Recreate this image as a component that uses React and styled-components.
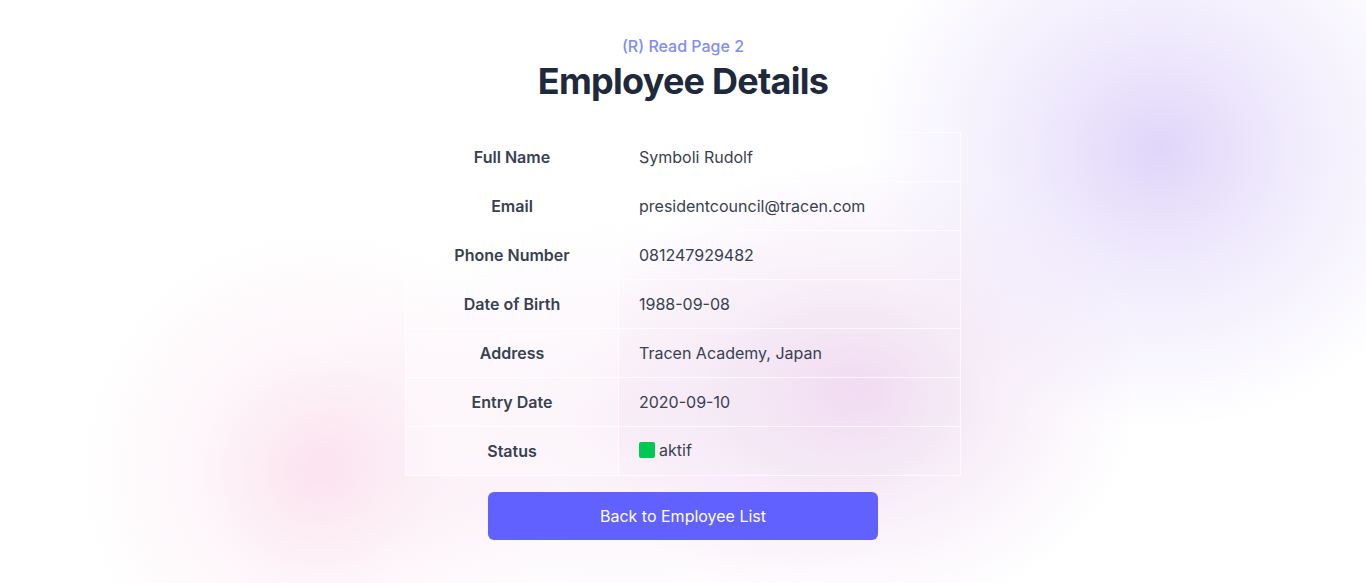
import React from 'react'
import styled, { createGlobalStyle } from 'styled-components'

const GlobalStyle = createGlobalStyle`
  html, body {
    margin: 0;
    padding: 0;
    background: #ffffff;
  }
  body {
    font-family: 'Inter', 'Noto Sans', sans-serif;
    color: #374151;
  }
`

const Page = styled.div`
  position: relative;
  min-height: 583px;
  overflow: hidden;
  background:
    radial-gradient(ellipse 300px 280px at 1160px 150px, rgba(214, 200, 248, 0.75) 0, rgba(224, 212, 250, 0.45) 45%, rgba(240, 234, 253, 0) 100%),
    radial-gradient(circle at 320px 470px, rgba(250, 215, 232, 0.7) 0, rgba(251, 228, 240, 0.35) 120px, rgba(255, 255, 255, 0) 240px),
    radial-gradient(ellipse 280px 230px at 860px 390px, rgba(236, 208, 238, 0.8) 0, rgba(240, 220, 242, 0.4) 55%, rgba(255, 255, 255, 0) 100%),
    radial-gradient(ellipse 320px 200px at 620px 420px, rgba(245, 225, 242, 0.6) 0, rgba(255, 255, 255, 0) 100%),
    #ffffff;
`

const Content = styled.main`
  display: flex;
  flex-direction: column;
  align-items: center;
  padding-top: 34px;
`

const Eyebrow = styled.p`
  margin: 0;
  font-size: 16px;
  line-height: 24px;
  font-weight: 500;
  color: #818cf8;
`

const Title = styled.h1`
  margin: 3px 0 31px;
  font-size: 36px;
  line-height: 40px;
  font-weight: 700;
  letter-spacing: -0.75px;
  color: #1e293b;
`

const Table = styled.table`
  width: 556px;
  border-collapse: collapse;
  border: 1px solid rgba(255, 255, 255, 0.75);
`

const Row = styled.tr`
  border-bottom: 1px solid rgba(255, 255, 255, 0.75);
`

const Label = styled.th`
  width: 212px;
  height: 48px;
  padding: 0;
  font-size: 16px;
  font-weight: 600;
  color: #374151;
  text-align: center;
  background: rgba(255, 255, 255, 0.35);
  border-right: 1px solid rgba(255, 255, 255, 0.75);
`

const Value = styled.td`
  height: 48px;
  padding: 0 20px;
  font-size: 16px;
  font-weight: 400;
  color: #374151;
  text-align: left;
  background: rgba(255, 255, 255, 0.08);
`

const Status = styled.span`
  display: inline-flex;
  align-items: center;
  gap: 4px;
`

const Dot = styled.span`
  display: inline-block;
  width: 16px;
  height: 16px;
  border-radius: 2px;
  background: ${p => (p.$active ? '#00c853' : '#ef4444')};
`

const BackButton = styled.button`
  margin-top: 16px;
  width: 390px;
  height: 48px;
  border: none;
  border-radius: 6px;
  background: #6161ff;
  color: #ffffff;
  font-family: inherit;
  font-size: 16px;
  font-weight: 400;
  cursor: pointer;
`

const employee = [
  ['Full Name', 'Symboli Rudolf'],
  ['Email', 'presidentcouncil@tracen.com'],
  ['Phone Number', '081247929482'],
  ['Date of Birth', '1988-09-08'],
  ['Address', 'Tracen Academy, Japan'],
  ['Entry Date', '2020-09-10']
]

export default function App() {
  const status = 'aktif'
  return (
    <Page>
      <GlobalStyle />
      <Content>
        <Eyebrow>(R) Read Page 2</Eyebrow>
        <Title>Employee Details</Title>
        <Table>
          <tbody>
            {employee.map(([label, value]) => (
              <Row key={label}>
                <Label scope="row">{label}</Label>
                <Value>{value}</Value>
              </Row>
            ))}
            <Row>
              <Label scope="row">Status</Label>
              <Value>
                <Status>
                  <Dot $active={status === 'aktif'} />
                  {status}
                </Status>
              </Value>
            </Row>
          </tbody>
        </Table>
        <BackButton type="button">Back to Employee List</BackButton>
      </Content>
    </Page>
  )
}
